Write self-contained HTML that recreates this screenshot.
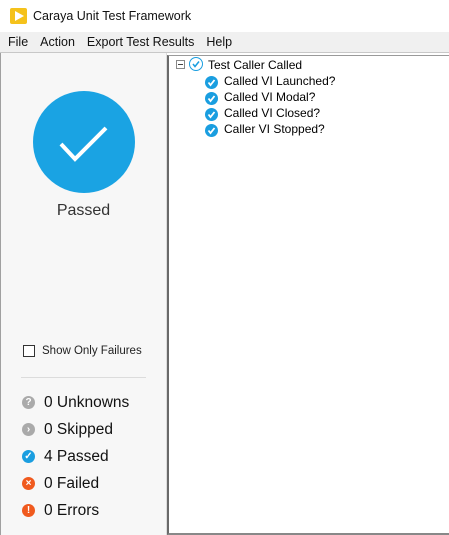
<!DOCTYPE html>
<html><head><style>
*{margin:0;padding:0;box-sizing:border-box}
body{width:449px;height:535px;overflow:hidden;background:#fff;font-family:"Liberation Sans",sans-serif;position:relative}
.a{position:absolute}
.menu span{margin-right:12px}
.tree div{position:absolute;font-size:12px;color:#000;white-space:nowrap}
.ck{display:inline-block;width:13px;height:13px;border-radius:50%;background:#1a9ee0;position:absolute}
.stat{position:absolute;left:22px;font-size:15.5px;color:#111;white-space:nowrap}
.ic{position:absolute;left:0;top:2px;width:13px;height:13px;border-radius:50%;color:#fff;font-size:10px;font-weight:bold;text-align:center;line-height:13px}
</style></head><body>
<div class="a" style="left:0;top:0;width:449px;height:32px;background:#fff"></div>
<div class="a" style="left:10px;top:8px;width:17px;height:16px;background:#f5c21b;border-radius:2px"></div>
<svg class="a" style="left:13px;top:10px" width="12" height="12"><polygon points="2,1 11,6 2,11" fill="#fff"/></svg>
<div class="a" style="left:33px;top:9px;font-size:12.5px;color:#111">Caraya Unit Test Framework</div>
<div class="a menu" style="left:0;top:32px;width:449px;height:21px;background:#f0f0f0;border-bottom:1px solid #c8c8c8;font-size:12.5px;padding:3px 0 0 8px;color:#111"><span>File</span><span>Action</span><span>Export Test Results</span><span>Help</span></div>
<div class="a" style="left:0;top:53px;width:167px;height:482px;background:#f7f7f7;border-left:1px solid #a0a0a0;border-right:1px solid #dcdcdc"></div>
<div class="a" style="left:167px;top:55px;width:282px;height:480px;background:#fff;border-left:2px solid #6a6a6a;border-top:1px solid #9a9a9a;border-bottom:2px solid #888"></div>
<div class="a" style="left:33px;top:91px;width:102px;height:102px;border-radius:50%;background:#1aa3e3"></div>
<svg class="a" style="left:33px;top:91px" width="102" height="102"><polyline points="28,53 42,68 73,37" fill="none" stroke="#fff" stroke-width="4"/></svg>
<div class="a" style="left:0;top:202px;width:167px;text-align:center;font-size:16px;color:#333">Passed</div>
<div class="a" style="left:23px;top:345px;width:12px;height:12px;border:1px solid #333;background:#fff"></div>
<div class="a" style="left:42px;top:345px;font-size:11.5px;color:#222">Show Only Failures</div>
<div class="a" style="left:21px;top:377px;width:125px;height:1px;background:#dcdcdc"></div>
<div class="a" style="left:0;top:0">
<div class="stat" style="top:394px"><span class="ic" style="background:#aaa">?</span><span style="margin-left:22px">0 Unknowns</span></div>
<div class="stat" style="top:421px"><span class="ic" style="background:#aaa">›</span><span style="margin-left:22px">0 Skipped</span></div>
<div class="stat" style="top:448px"><span class="ic" style="background:#1a9ee0">✓</span><span style="margin-left:22px">4 Passed</span></div>
<div class="stat" style="top:475px"><span class="ic" style="background:#f05a1e">×</span><span style="margin-left:22px">0 Failed</span></div>
<div class="stat" style="top:502px"><span class="ic" style="background:#f05a1e">!</span><span style="margin-left:22px">0 Errors</span></div>
</div>
<div class="tree">
<div style="left:176px;top:60px;width:9px;height:9px;border:1px solid #888;background:#fff"></div>
<div style="left:178px;top:64px;width:5px;height:1px;background:#444"></div>
<div style="left:189px;top:57px;width:14px;height:14px;border-radius:50%;border:1.5px solid #1a9ee0;background:#fff"></div>
<svg style="position:absolute;left:189px;top:57px" width="14" height="14"><polyline points="4,7 6,9.5 10,4.5" fill="none" stroke="#1a9ee0" stroke-width="1.5"/></svg>
<div style="left:208px;top:58px">Test Caller Called</div>
<div style="left:205px;top:74px"><span class="ck" style="left:0;top:2px"></span><svg style="position:absolute;left:0;top:2px" width="13" height="13"><polyline points="3.5,6.5 5.5,9 9.5,4" fill="none" stroke="#fff" stroke-width="1.8"/></svg><span style="margin-left:19px">Called VI Launched?</span></div>
<div style="left:205px;top:90px"><span class="ck" style="left:0;top:2px"></span><svg style="position:absolute;left:0;top:2px" width="13" height="13"><polyline points="3.5,6.5 5.5,9 9.5,4" fill="none" stroke="#fff" stroke-width="1.8"/></svg><span style="margin-left:19px">Called VI Modal?</span></div>
<div style="left:205px;top:106px"><span class="ck" style="left:0;top:2px"></span><svg style="position:absolute;left:0;top:2px" width="13" height="13"><polyline points="3.5,6.5 5.5,9 9.5,4" fill="none" stroke="#fff" stroke-width="1.8"/></svg><span style="margin-left:19px">Called VI Closed?</span></div>
<div style="left:205px;top:122px"><span class="ck" style="left:0;top:2px"></span><svg style="position:absolute;left:0;top:2px" width="13" height="13"><polyline points="3.5,6.5 5.5,9 9.5,4" fill="none" stroke="#fff" stroke-width="1.8"/></svg><span style="margin-left:19px">Caller VI Stopped?</span></div>
</div>
</body></html>
